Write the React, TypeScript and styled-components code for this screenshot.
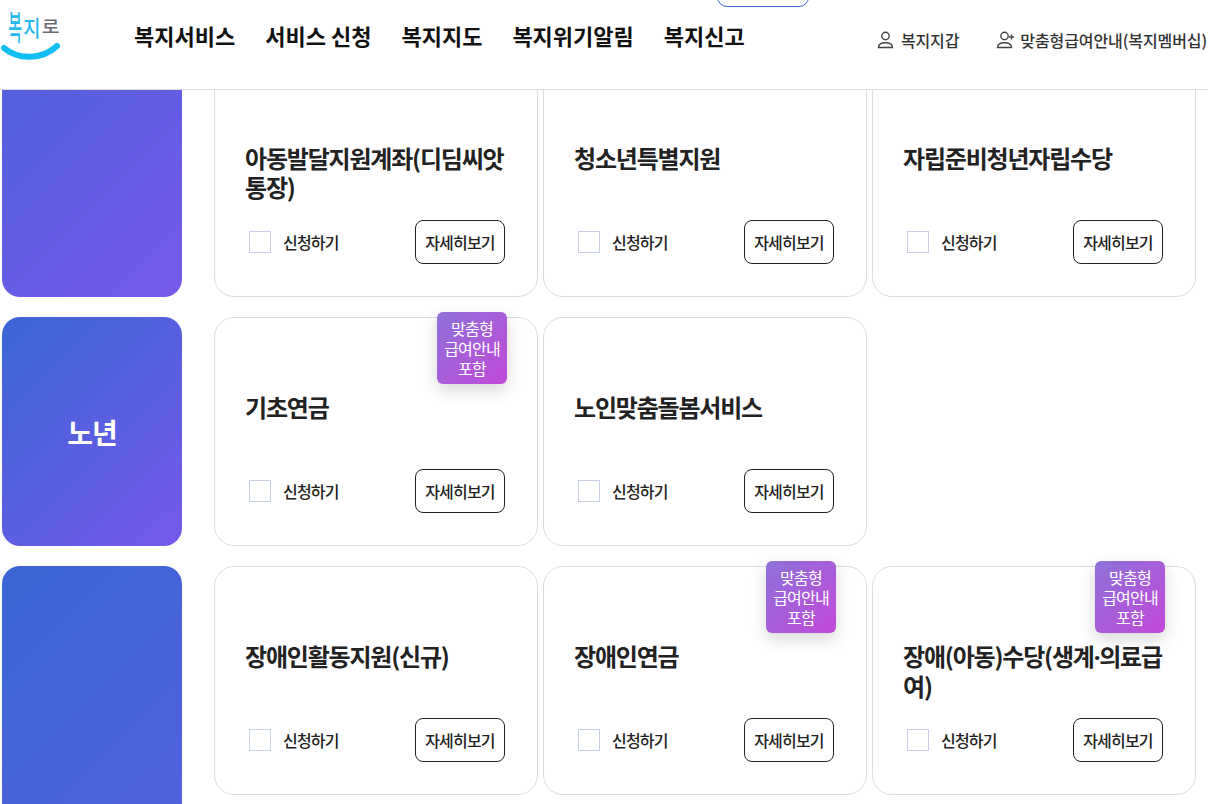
import React from "react";
import styled, { createGlobalStyle } from "styled-components";

const Global = createGlobalStyle`
  html, body { margin: 0; padding: 0; height: 100%; overflow: hidden; background: #fff; }
  body { font-family: "Noto Sans CJK KR", "Noto Sans", sans-serif; color: #222; }
  * { box-sizing: border-box; }
`;

const Header = styled.header`
  position: fixed;
  inset: 0 0 auto 0;
  height: 90px;
  background: #fff;
  border-bottom: 1px solid #ddd;
  z-index: 10;
  display: flex;
  align-items: flex-start;
`;

const LogoBox = styled.div`
  position: relative;
  width: 134px;
  height: 89px;
  flex: none;
`;

const LogoText = styled.div`
  position: absolute;
  left: 5px;
  top: 7px;
  display: flex;
  align-items: center;
  height: 38px;
  font-weight: 500;
`;

const Glyph = styled.span<{ $w: number; $size: number; $sx: number; $sy: number; $gray?: boolean }>`
  display: block;
  width: ${(p) => p.$w}px;
  text-align: center;
  font-size: ${(p) => p.$size}px;
  line-height: 1;
  color: ${(p) => (p.$gray ? "#6a6a72" : "#25b9ee")};
  transform: scale(${(p) => p.$sx}, ${(p) => p.$sy});
`;

const Smile = styled.svg`
  position: absolute;
  left: 0;
  top: 40px;
`;

const Nav = styled.nav`
  display: flex;
  gap: 30px;
  padding-top: 19px;
`;

const NavItem = styled.a`
  font-size: 22px;
  font-weight: 700;
  line-height: 32px;
  color: #111;
  white-space: nowrap;
`;

const Utility = styled.div`
  margin-left: auto;
  display: flex;
  gap: 37px;
  padding: 29px 1px 0 0;
  white-space: nowrap;
`;

const UtilityItem = styled.a`
  display: flex;
  align-items: center;
  gap: 5px;
  font-size: 16px;
  font-weight: 500;
  line-height: 22px;
  letter-spacing: -0.1px;
  color: #333;
`;

const TopTab = styled.div`
  position: absolute;
  left: 717px;
  top: -20px;
  width: 92px;
  height: 27px;
  border: 1px solid #3f66d6;
  border-radius: 10px;
`;

const Content = styled.main`
  height: 100vh;
  overflow: hidden;
  padding: 68px 0 0 2px;
  display: flex;
  flex-direction: column;
  gap: 20px;
`;

const Row = styled.section`
  display: flex;
  flex: none;
  gap: 32px;
  height: 229px;
`;

const Side = styled.div<{ $rows: number; $above: number }>`
  width: 180px;
  flex: none;
  height: ${(p) => p.$rows * 229 + (p.$rows - 1) * 20}px;
  margin-top: ${(p) => -p.$above * 249}px;
  border-radius: 18px;
  background: linear-gradient(135deg, #3b66d4 0%, #7659ec 100%);
  color: #fff;
  font-size: 28px;
  font-weight: 700;
  letter-spacing: -1px;
  display: flex;
  align-items: center;
  justify-content: center;
`;

const Cards = styled.div`
  display: grid;
  grid-template-columns: repeat(3, 324px);
  gap: 5px;
`;

const Card = styled.article`
  position: relative;
  border: 1px solid #ddd;
  border-radius: 20px;
  background: #fff;
  padding: 74px 32px 32px 30px;
  display: flex;
  flex-direction: column;
  justify-content: space-between;
`;

const Title = styled.h3`
  margin: 0;
  font-size: 24px;
  font-weight: 700;
  line-height: 29px;
  letter-spacing: -1.2px;
  color: #222;
`;

const MidDot = styled.span`
  font-family: "Noto Sans", sans-serif;
`;

const Actions = styled.div`
  display: flex;
  align-items: center;
  justify-content: space-between;
`;

const Apply = styled.label`
  display: flex;
  align-items: center;
  gap: 12px;
  margin-left: 4px;
  font-size: 16px;
  font-weight: 500;
  letter-spacing: -0.8px;
  color: #222;
`;

const Check = styled.span`
  width: 22px;
  height: 22px;
  border: 1px solid #c6cfe3;
  background: #fff;
`;

const Detail = styled.button`
  width: 90px;
  height: 44px;
  padding: 0;
  background: #fff;
  border: 1px solid #222;
  border-radius: 8px;
  font-family: inherit;
  font-size: 16px;
  font-weight: 500;
  letter-spacing: -0.8px;
  color: #222;
`;

const Badge = styled.div`
  position: absolute;
  top: -6px;
  right: 30px;
  width: 70px;
  height: 72px;
  border-radius: 6px;
  background: linear-gradient(135deg, #8e72d8 0%, #c249d9 100%);
  box-shadow: 0 6px 16px rgba(0, 0, 0, 0.16);
  color: #fff;
  font-size: 16px;
  font-weight: 400;
  letter-spacing: -0.8px;
  line-height: 20px;
  text-align: center;
  padding-top: 6px;
`;

type Item = { title: React.ReactNode; key: string; badge?: boolean };
type Group = { name: string; rows: number; above: number; items: Item[] };

const groups: Group[] = [
  {
    name: "",
    rows: 2,
    above: 1,
    items: [
      { key: "a", title: "아동발달지원계좌(디딤씨앗통장)" },
      { key: "b", title: "청소년특별지원" },
      { key: "c", title: "자립준비청년자립수당" },
    ],
  },
  {
    name: "노년",
    rows: 1,
    above: 0,
    items: [
      { key: "d", title: "기초연금", badge: true },
      { key: "e", title: "노인맞춤돌봄서비스" },
    ],
  },
  {
    name: "",
    rows: 4,
    above: 0,
    items: [
      { key: "f", title: "장애인활동지원(신규)" },
      { key: "g", title: "장애인연금", badge: true },
      {
        key: "h",
        title: (
          <>
            장애(아동)수당(생계<MidDot>·</MidDot>의료급여)
          </>
        ),
        badge: true,
      },
    ],
  },
];

const navItems = ["복지서비스", "서비스 신청", "복지지도", "복지위기알림", "복지신고"];

const UserIcon = ({ plus }: { plus?: boolean }) => (
  <svg width="19" height="18" viewBox="0 0 19 18" fill="none" stroke="#444" strokeWidth="1.400">
    <circle cx="8.500" cy="5" r="3.700" />
    <path d="M1.500 16.500c0-3.200 2.200-4.800 7-4.800s7 1.600 7 4.800z" />
    {plus && <path d="M15.500 3.500v5M13 6h5" />}
  </svg>
);

export default function App() {
  return (
    <>
      <Global />
      <Header>
        <LogoBox>
          <LogoText>
            <Glyph $w={17} $size={24} $sx={0.62} $sy={1.4}>복</Glyph>
            <Glyph $w={18} $size={22} $sx={0.85} $sy={1}>지</Glyph>
            <Glyph $w={17} $size={24} $sx={0.8} $sy={0.7} $gray>로</Glyph>
          </LogoText>
          <Smile width="62" height="24" viewBox="0 0 62 24" fill="none">
            <path d="M4 8c14 12 38 12 53-2" stroke="#12bdf2" strokeWidth="6" strokeLinecap="round" />
          </Smile>
        </LogoBox>
        <Nav>
          {navItems.map((n) => (
            <NavItem key={n}>{n}</NavItem>
          ))}
        </Nav>
        <TopTab />
        <Utility>
          <UtilityItem>
            <UserIcon />
            복지지갑
          </UtilityItem>
          <UtilityItem>
            <UserIcon plus />
            맞춤형급여안내(복지멤버십)
          </UtilityItem>
        </Utility>
      </Header>
      <Content>
        {groups.map((g, i) => (
          <Row key={i}>
            <Side $rows={g.rows} $above={g.above}>{g.name}</Side>
            <Cards>
              {g.items.map((it) => (
                <Card key={it.key}>
                  {it.badge && (
                    <Badge>
                      맞춤형
                      <br />
                      급여안내
                      <br />
                      포함
                    </Badge>
                  )}
                  <Title>{it.title}</Title>
                  <Actions>
                    <Apply>
                      <Check />
                      신청하기
                    </Apply>
                    <Detail>자세히보기</Detail>
                  </Actions>
                </Card>
              ))}
            </Cards>
          </Row>
        ))}
      </Content>
    </>
  );
}
